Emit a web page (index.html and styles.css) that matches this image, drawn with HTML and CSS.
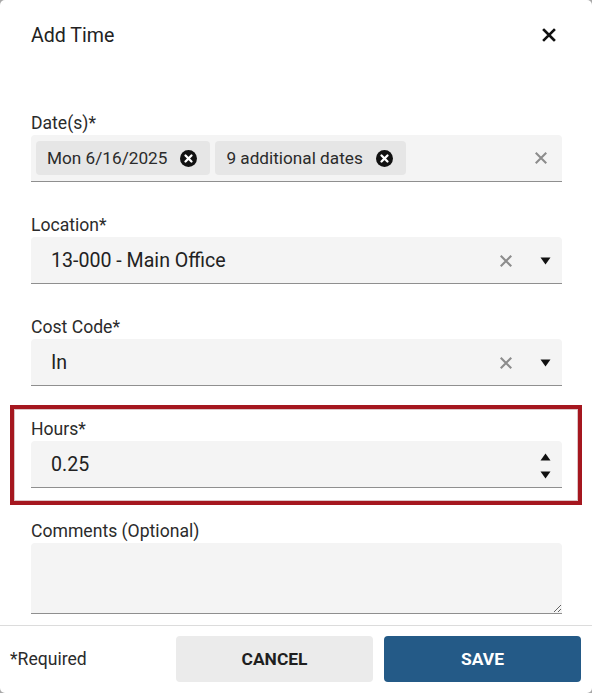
FILE: index.html
```html
<!DOCTYPE html>
<html lang="en">
<head>
<meta charset="utf-8">
<title>Add Time</title>
<link rel="stylesheet" href="styles.css">
</head>
<body>
<div class="dialog">
  <header class="dlg-head">
    <h1 class="title">Add Time</h1>
    <button class="close" type="button" aria-label="Close">
      <svg width="14" height="14" viewBox="0 0 14 14"><path d="M2 2L12 12M12 2L2 12" stroke="#111" stroke-width="2.6" stroke-linecap="square"/></svg>
    </button>
  </header>

  <div class="dlg-body">
    <div class="group">
      <div class="label">Date(s)*</div>
      <div class="field chips-field">
        <div class="chips">
          <span class="chip">Mon 6/16/2025
            <svg class="chip-x" width="17" height="17" viewBox="0 0 16 16"><circle cx="8" cy="8" r="8" fill="#111"/><path d="M5.2 5.2L10.8 10.8M10.8 5.2L5.2 10.8" stroke="#fff" stroke-width="2.2" stroke-linecap="round"/></svg>
          </span>
          <span class="chip">9 additional dates
            <svg class="chip-x" width="17" height="17" viewBox="0 0 16 16"><circle cx="8" cy="8" r="8" fill="#111"/><path d="M5.2 5.2L10.8 10.8M10.8 5.2L5.2 10.8" stroke="#fff" stroke-width="2.2" stroke-linecap="round"/></svg>
          </span>
        </div>
        <span class="clear clear-dates"><svg width="14" height="14" viewBox="0 0 12 12"><path d="M1.5 1.5L10.5 10.5M10.5 1.5L1.5 10.5" stroke="#8c8c8c" stroke-width="1.8"/></svg></span>
      </div>
    </div>

    <div class="group">
      <div class="label">Location*</div>
      <div class="field">
        <span class="value">13-000 - Main Office</span>
        <span class="clear"><svg width="14" height="14" viewBox="0 0 12 12"><path d="M1.5 1.5L10.5 10.5M10.5 1.5L1.5 10.5" stroke="#8c8c8c" stroke-width="1.8"/></svg></span>
        <span class="arrow"><svg width="11" height="8" viewBox="0 0 11 8"><path d="M0.5 0.5H10.5L5.5 7.5Z" fill="#111"/></svg></span>
      </div>
    </div>

    <div class="group">
      <div class="label">Cost Code*</div>
      <div class="field">
        <span class="value">In</span>
        <span class="clear"><svg width="14" height="14" viewBox="0 0 12 12"><path d="M1.5 1.5L10.5 10.5M10.5 1.5L1.5 10.5" stroke="#8c8c8c" stroke-width="1.8"/></svg></span>
        <span class="arrow"><svg width="11" height="8" viewBox="0 0 11 8"><path d="M0.5 0.5H10.5L5.5 7.5Z" fill="#111"/></svg></span>
      </div>
    </div>

    <div class="group highlight">
      <div class="label">Hours*</div>
      <div class="field">
        <span class="value">0.25</span>
        <span class="spinner">
          <svg width="11" height="8" viewBox="0 0 11 8"><path d="M0.5 7.5H10.5L5.5 0.5Z" fill="#111"/></svg>
          <svg width="11" height="8" viewBox="0 0 11 8"><path d="M0.5 0.5H10.5L5.5 7.5Z" fill="#111"/></svg>
        </span>
      </div>
    </div>

    <div class="group">
      <div class="label">Comments (Optional)</div>
      <textarea class="comments" aria-label="Comments"></textarea>
    </div>
  </div>

  <footer class="dlg-foot">
    <span class="required">*Required</span>
    <div class="actions">
      <button class="btn btn-cancel" type="button">CANCEL</button>
      <button class="btn btn-save" type="button">SAVE</button>
    </div>
  </footer>
</div>
</body>
</html>
```

FILE: styles.css
```css
* { box-sizing: border-box; }

html, body {
  margin: 0;
  height: 100%;
}

body {
  background: #a8a8a8;
  font-family: Roboto, "Liberation Sans", Arial, sans-serif;
  color: #262626;
}

.dialog {
  height: 100vh;
  background: #fff;
  border-radius: 5px;
  display: flex;
  flex-direction: column;
  overflow: hidden;
}

.dlg-head {
  flex-shrink: 0;
  height: 70px;
  padding: 0 36px 0 31px;
  display: flex;
  align-items: center;
  justify-content: space-between;
}

.title {
  margin: 0;
  font-size: 19.6px;
  font-weight: 400;
  color: #222;
}

.close {
  border: 0;
  background: none;
  padding: 0;
  width: 14px;
  height: 14px;
  display: flex;
}

.dlg-body {
  flex-shrink: 0;
  padding: 43px 30px 11px 31px;
  display: flex;
  flex-direction: column;
  gap: 33px;
}

.group {
  display: flex;
  flex-direction: column;
}

.label {
  font-size: 17.6px;
  line-height: 20px;
  margin-bottom: 2px;
  color: #2b2b2b;
}

.field {
  height: 47px;
  background: #f4f4f4;
  border-bottom: 1px solid #8f8f8f;
  border-radius: 4px 4px 0 0;
  display: flex;
  align-items: center;
  padding: 1px 11px 0 20px;
}

.value {
  flex: 1;
  font-size: 19.6px;
  color: #222;
}

.clear {
  display: flex;
  margin-right: 27px;
}

.arrow {
  display: flex;
}

.chips-field {
  padding: 0 14px 0 5px;
}

.chips {
  flex: 1;
  display: flex;
  gap: 5px;
}

.chip {
  height: 34px;
  background: #e6e6e6;
  border-radius: 4px;
  padding: 0 13px 0 11px;
  display: flex;
  align-items: center;
  gap: 13px;
  font-size: 17.2px;
  color: #2b2b2b;
}

.chip-x { display: block; }

.clear-dates { margin-right: 0; }

.spinner {
  display: flex;
  flex-direction: column;
  gap: 10px;
  margin-top: 2px;
}

.highlight {
  margin: -14px -20px -17px -21px;
  padding: 10px 16px 13px 17px;
  border: 4px solid #a5171f;
  box-shadow: inset 0 0 0 1px #dcc4c6;
}

.comments {
  display: block;
  width: 100%;
  height: 71px;
  margin: 0;
  background: #f4f4f4;
  border: 0;
  border-bottom: 1px solid #8f8f8f;
  border-radius: 4px 4px 0 0;
  resize: vertical;
  font-family: inherit;
  font-size: 17.6px;
}

.dlg-foot {
  flex-shrink: 0;
  margin-top: auto;
  border-top: 1px solid #dcdcdc;
  padding: 10px 11px 11px 10px;
  display: flex;
  align-items: center;
  justify-content: space-between;
}

.required {
  font-size: 17.6px;
  color: #2b2b2b;
}

.actions {
  display: flex;
  gap: 11px;
}

.btn {
  width: 197px;
  height: 46px;
  border: 0;
  border-radius: 4px;
  font-family: Roboto, "Liberation Sans", Arial, sans-serif;
  font-size: 17.4px;
  font-weight: 700;
}

.btn-cancel {
  background: #ebebeb;
  color: #1f1f1f;
}

.btn-save {
  background: #245a87;
  color: #fff;
}
```
